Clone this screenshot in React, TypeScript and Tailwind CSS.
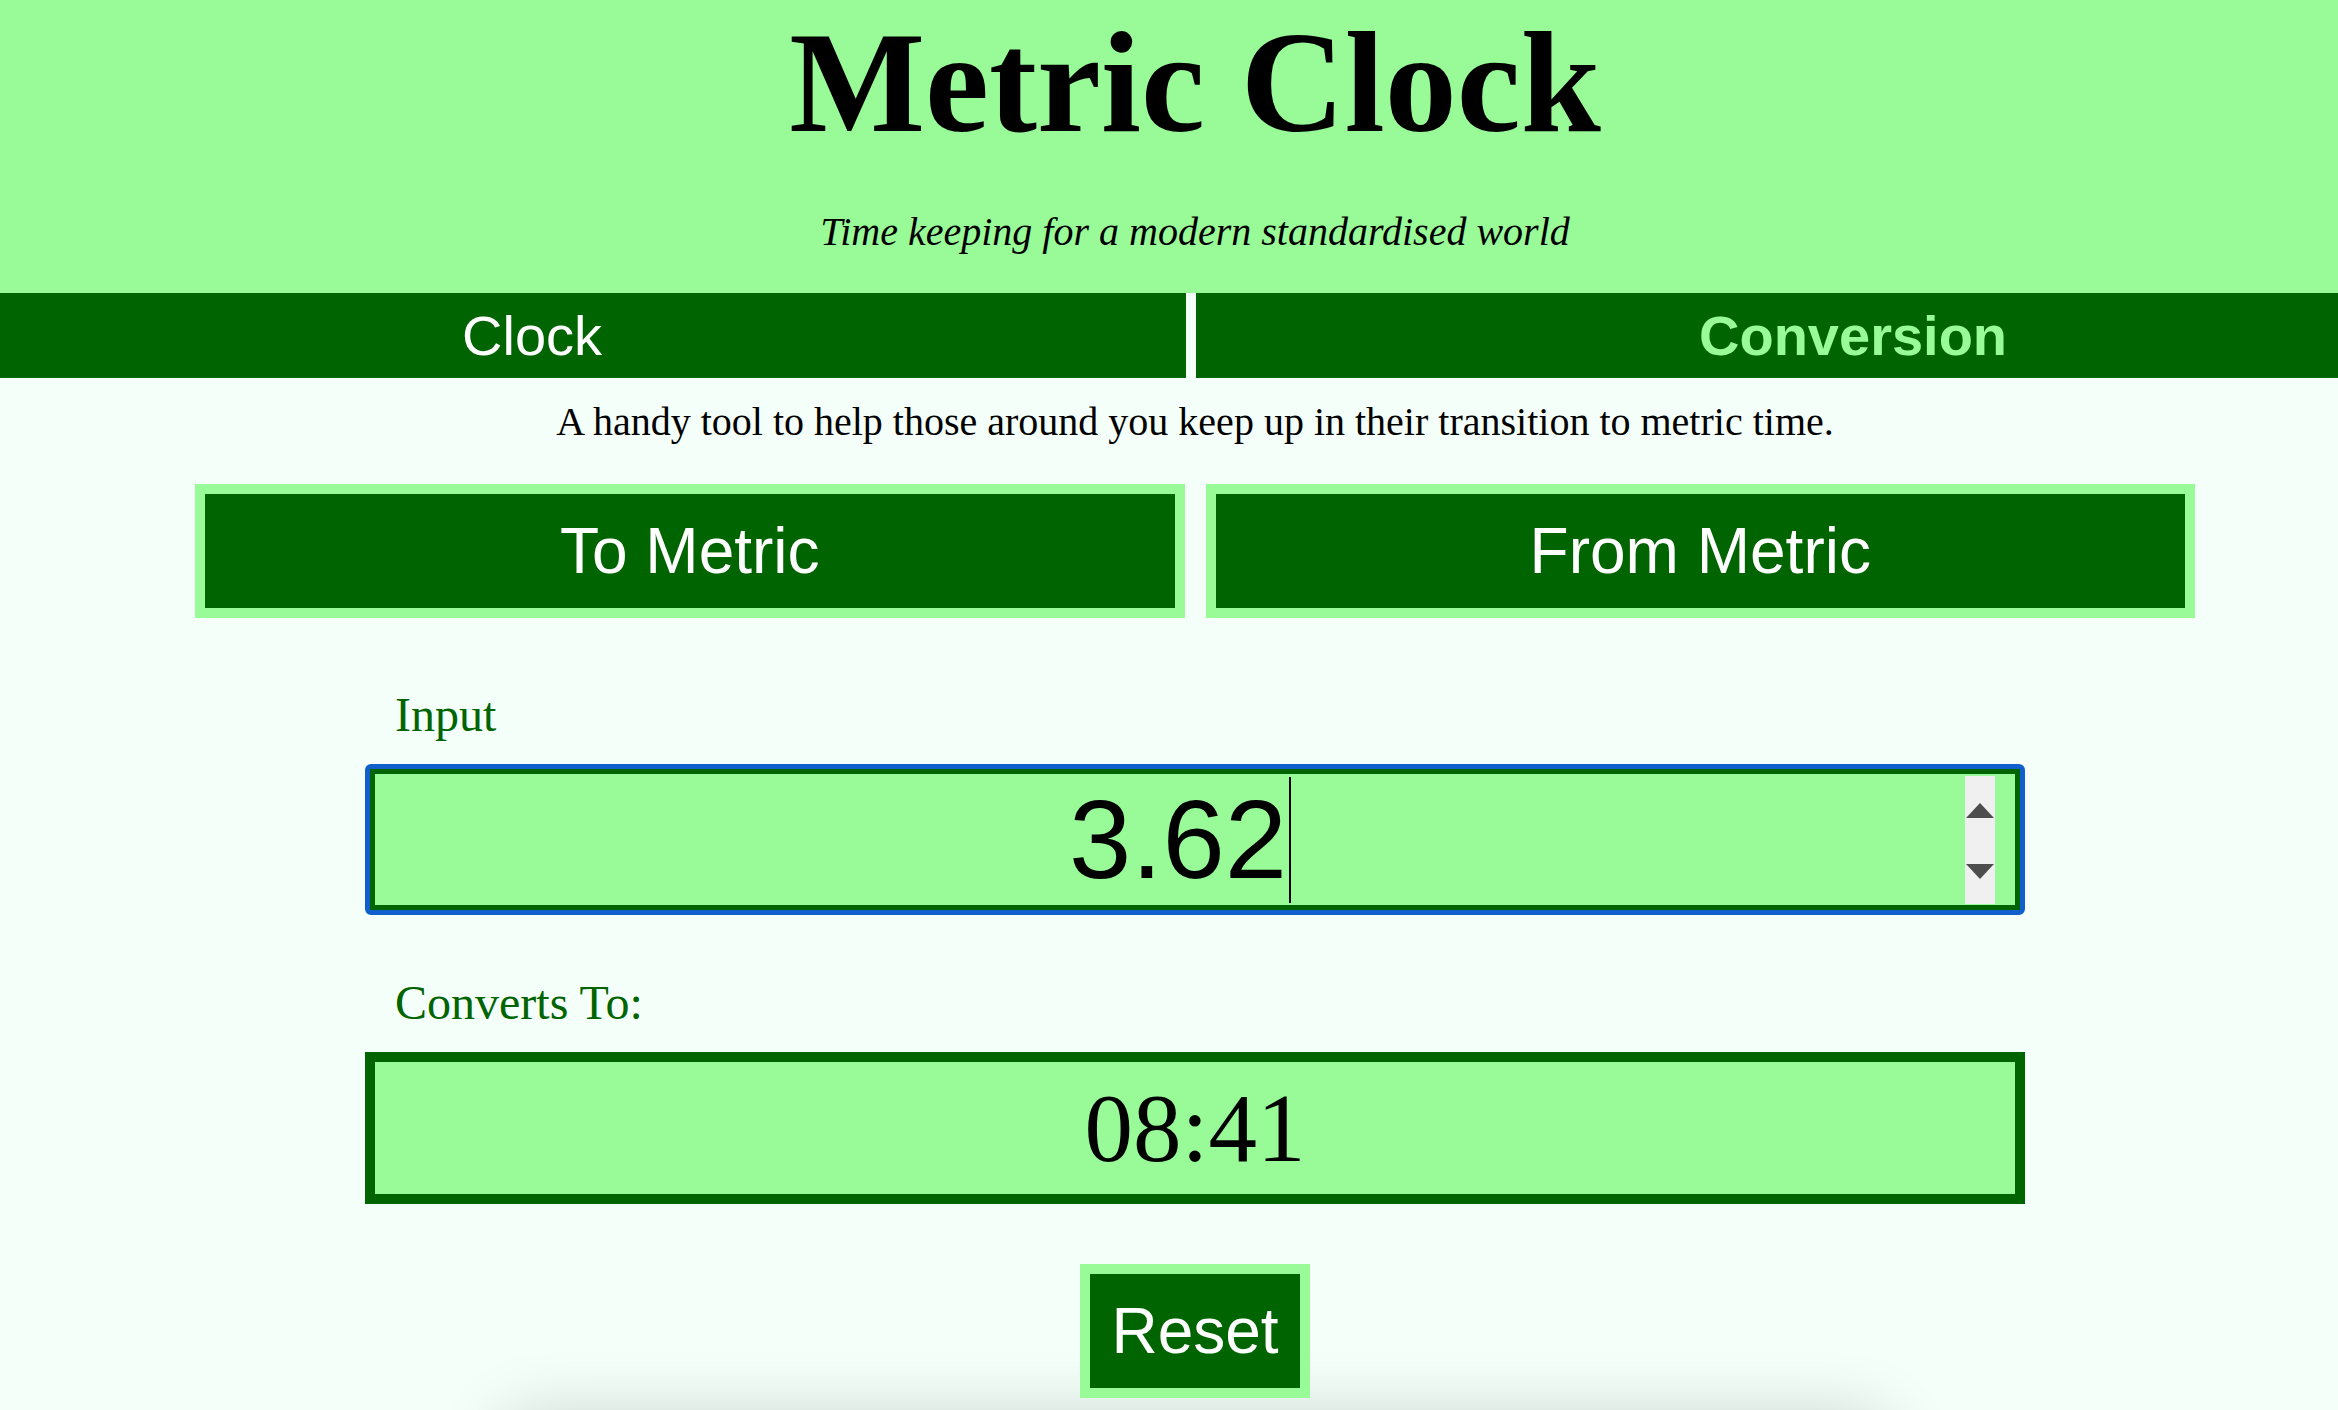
import React from "react"

const serif = "font-['Liberation_Serif','Times_New_Roman',serif]"
const sans = "font-['Liberation_Sans',Arial,sans-serif]"

const Spinner = () => (
  <div className="w-[30px] h-[128px] bg-[#f0f0f0] shrink-0">
    <svg width="30" height="128" viewBox="0 0 30 128">
      <polygon points="1,42 15,27 29,42" fill="#4d4d4d" />
      <polygon points="1,88 29,88 15,103" fill="#4d4d4d" />
    </svg>
  </div>
)

const App = () => {
  const [mode, setMode] = React.useState<"to" | "from">("to")

  return (
    <div className="w-full min-h-screen overflow-hidden bg-[#f5fffa] text-black">
      <div className="w-[2390px]">
        {/* header */}
        <header className="bg-[#98fb98] pt-[11px] pb-[41px] text-center">
          <h1 className={`${serif} font-bold text-[144px] leading-none`}>Metric Clock</h1>
          <p className={`${serif} italic text-[40px] leading-none mt-[57px]`}>
            Time keeping for a modern standardised world
          </p>
        </header>

        {/* nav */}
        <nav className={`${sans} flex h-[85px] gap-[10px] text-[56px] leading-none`}>
          <a className="w-[1186px] bg-[#006400] flex items-center pl-[462px] text-white">Clock</a>
          <a className="flex-1 bg-[#006400] flex items-center pl-[503px] font-bold text-[#98fb98]">Conversion</a>
        </nav>

        <p className={`${serif} text-[40px] leading-none text-center mt-[24px]`}>
          A handy tool to help those around you keep up in their transition to metric time.
        </p>

        {/* mode buttons */}
        <div className={`${sans} flex gap-[21px] px-[195px] mt-[42px]`}>
          <button
            onClick={() => setMode("to")}
            className="flex-1 h-[134px] border-[10px] border-[#98fb98] bg-[#006400] text-white text-[64px] leading-none"
          >
            To Metric
          </button>
          <button
            onClick={() => setMode("from")}
            className="flex-1 h-[134px] border-[10px] border-[#98fb98] bg-[#006400] text-white text-[64px] leading-none"
          >
            From Metric
          </button>
        </div>

        {/* converter */}
        <div className="px-[365px]" data-mode={mode}>
          <label className={`${serif} block mt-[73px] pl-[30px] text-[48px] leading-none text-[#006400]`}>
            Input
          </label>
          <div className="mt-[25px] h-[151px] rounded-[6px] border-[5px] border-[#105fcc]">
            <div className="h-full border-[5px] border-[#006400] bg-[#98fb98] flex items-center px-[20px]">
              <div className="flex-1 flex items-center justify-center">
                <span className={`${sans} text-[112px] leading-none`}>3.62</span>
                <span className="ml-[2px] w-[2px] h-[126px] bg-black" />
              </div>
              <Spinner />
            </div>
          </div>

          <label className={`${serif} block mt-[64px] pl-[30px] text-[48px] leading-none text-[#006400]`}>
            Converts To:
          </label>
          <div className={`${serif} mt-[25px] h-[152px] border-[10px] border-[#006400] bg-[#98fb98] flex items-center justify-center text-[97px] leading-none`}>
            08:41
          </div>

          <div className="flex justify-center mt-[60px]">
            <button className={`${sans} h-[134px] px-[21px] border-[10px] border-[#98fb98] bg-[#006400] text-white text-[64px] leading-none`}>
              Reset
            </button>
          </div>
        </div>

        {/* next card peeking from below */}
        <div className="mx-auto mt-[22px] w-[1380px] h-[400px] rounded-[20px] bg-[#f5fffa] shadow-[0_0_70px_rgba(0,0,0,0.2)]" />
      </div>
    </div>
  )
}

export default App
